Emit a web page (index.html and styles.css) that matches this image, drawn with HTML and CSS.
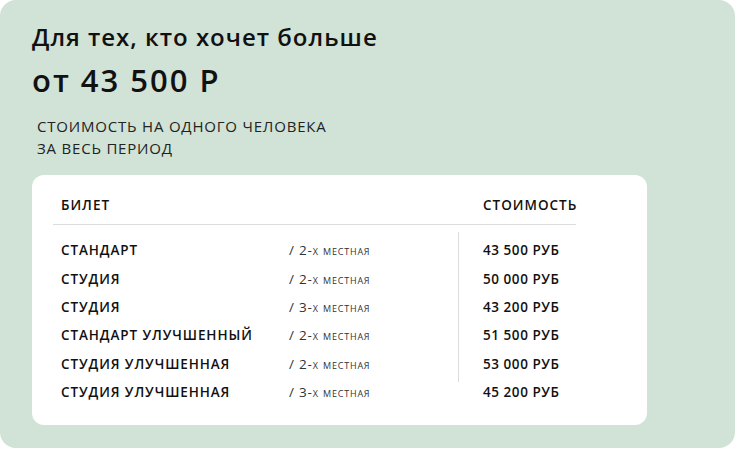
FILE: index.html
```html
<!DOCTYPE html>
<html lang="ru">
<head>
<meta charset="utf-8">
<link rel="stylesheet" href="styles.css">
</head>
<body>
<div class="panel">
  <h1 class="title">Для тех, кто хочет больше</h1>
  <div class="price">от 43 500 Р</div>
  <p class="note">стоимость на одного человека<br>за весь период</p>
  <div class="card">
    <div class="head">
      <span class="head-name">Билет</span>
      <span class="head-price">Стоимость</span>
    </div>
    <div class="rows">
      <span class="name">Стандарт</span><span class="type">/ 2-х местная</span><span class="sum">43 500 руб</span>
      <span class="name">Студия</span><span class="type">/ 2-х местная</span><span class="sum">50 000 руб</span>
      <span class="name">Студия</span><span class="type">/ 3-х местная</span><span class="sum">43 200 руб</span>
      <span class="name">Стандарт улучшенный</span><span class="type">/ 2-х местная</span><span class="sum">51 500 руб</span>
      <span class="name">Студия улучшенная</span><span class="type">/ 2-х местная</span><span class="sum">53 000 руб</span>
      <span class="name">Студия улучшенная</span><span class="type">/ 3-х местная</span><span class="sum">45 200 руб</span>
      <span class="vline"></span>
    </div>
  </div>
</div>
</body>
</html>
```

FILE: styles.css
```css
html, body {
  margin: 0;
  padding: 0;
  background: #ffffff;
}
body {
  font-family: "Open Sans", "Noto Sans", sans-serif;
  color: #111111;
}
.panel {
  box-sizing: border-box;
  width: 735px;
  height: 448px;
  background: #d1e2d7;
  border-radius: 16px;
  padding: 22px 88px 0 32px;
  display: flex;
  flex-direction: column;
}
.title {
  margin: 0;
  font-size: 24px;
  line-height: 30px;
  font-weight: 600;
  letter-spacing: 1px;
}
.price {
  margin-top: 8px;
  font-size: 31px;
  line-height: 40px;
  font-weight: 600;
  letter-spacing: 2px;
}
.note {
  margin: 15px 0 0 5px;
  font-size: 15px;
  line-height: 22px;
  font-weight: 400;
  letter-spacing: 0.8px;
  text-transform: uppercase;
  color: #222;
}
.card {
  margin-top: 16px;
  height: 250px;
  box-sizing: border-box;
  background: #ffffff;
  border-radius: 12px;
  padding: 20px 71px 0 21px;
}
.head {
  display: grid;
  grid-template-columns: 406px auto;
  padding: 0 0 9px 0;
  border-bottom: 1px solid #dcdcdc;
  font-size: 13.5px;
  line-height: 20px;
  font-weight: 600;
  letter-spacing: 1px;
  text-transform: uppercase;
}
.head-name {
  padding-left: 8px;
}
.head-price {
  padding-left: 24px;
}
.rows {
  display: grid;
  grid-template-columns: 234px 171px 1px auto;
  grid-auto-rows: 28.4px;
  margin-top: 11px;
  font-size: 13.5px;
  align-items: center;
}
.name {
  grid-column: 1;
  padding-left: 8px;
  font-weight: 600;
  letter-spacing: 0.9px;
  text-transform: uppercase;
}
.type {
  grid-column: 2;
  padding-left: 2px;
  font-weight: 400;
  font-variant: small-caps;
  letter-spacing: 0.8px;
  color: #333;
}
.sum {
  grid-column: 4;
  padding-left: 24px;
  font-weight: 600;
  letter-spacing: 0.55px;
  text-transform: uppercase;
}
.vline {
  grid-column: 3;
  grid-row: 1 / 6;
  align-self: stretch;
  background: #dcdcdc;
  margin: -4px 0 -4px;
}
```
